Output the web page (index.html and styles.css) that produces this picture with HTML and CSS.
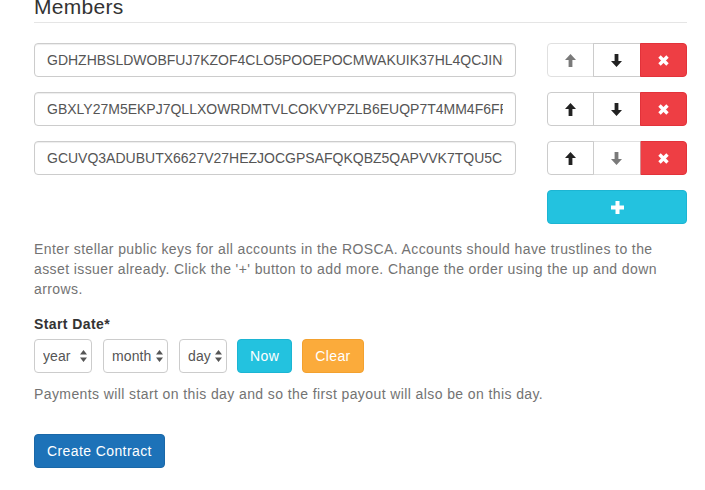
FILE: index.html
```html
<!DOCTYPE html>
<html lang="en">
<head>
<meta charset="utf-8">
<title>Members</title>
<link rel="stylesheet" href="styles.css">
</head>
<body>
<div class="page">
  <div class="legend">Members</div>

  <div class="member-row">
    <input class="form-control" type="text" value="GDHZHBSLDWOBFUJ7KZOF4CLO5POOEPOCMWAKUIK37HL4QCJINQ2R6">
    <div class="btn-group">
      <button class="btn btn-default" disabled>
        <svg class="ico" width="11" height="13" viewBox="0 0 11 13"><path d="M5.5 0 L11 6 H7.4 V13 H3.6 V6 H0 Z" fill="currentColor"/></svg>
      </button>
      <button class="btn btn-default">
        <svg class="ico" width="11" height="13" viewBox="0 0 11 13"><path d="M5.5 13 L11 7 H7.4 V0 H3.6 V7 H0 Z" fill="currentColor"/></svg>
      </button>
      <button class="btn btn-danger">
        <svg class="ico" width="11" height="11" viewBox="0 0 11 11"><path d="M1.5 1.5 L9.5 9.5 M9.5 1.5 L1.5 9.5" stroke="currentColor" stroke-width="3.4" stroke-linecap="butt"/></svg>
      </button>
    </div>
  </div>

  <div class="member-row">
    <input class="form-control" type="text" value="GBXLY27M5EKPJ7QLLXOWRDMTVLCOKVYPZLB6EUQP7T4MM4F6FRA2">
    <div class="btn-group">
      <button class="btn btn-default">
        <svg class="ico" width="11" height="13" viewBox="0 0 11 13"><path d="M5.5 0 L11 6 H7.4 V13 H3.6 V6 H0 Z" fill="currentColor"/></svg>
      </button>
      <button class="btn btn-default">
        <svg class="ico" width="11" height="13" viewBox="0 0 11 13"><path d="M5.5 13 L11 7 H7.4 V0 H3.6 V7 H0 Z" fill="currentColor"/></svg>
      </button>
      <button class="btn btn-danger">
        <svg class="ico" width="11" height="11" viewBox="0 0 11 11"><path d="M1.5 1.5 L9.5 9.5 M9.5 1.5 L1.5 9.5" stroke="currentColor" stroke-width="3.4"/></svg>
      </button>
    </div>
  </div>

  <div class="member-row">
    <input class="form-control" type="text" value="GCUVQ3ADUBUTX6627V27HEZJOCGPSAFQKQBZ5QAPVVK7TQU5CIL4M">
    <div class="btn-group">
      <button class="btn btn-default">
        <svg class="ico" width="11" height="13" viewBox="0 0 11 13"><path d="M5.5 0 L11 6 H7.4 V13 H3.6 V6 H0 Z" fill="currentColor"/></svg>
      </button>
      <button class="btn btn-default" disabled>
        <svg class="ico" width="11" height="13" viewBox="0 0 11 13"><path d="M5.5 13 L11 7 H7.4 V0 H3.6 V7 H0 Z" fill="currentColor"/></svg>
      </button>
      <button class="btn btn-danger">
        <svg class="ico" width="11" height="11" viewBox="0 0 11 11"><path d="M1.5 1.5 L9.5 9.5 M9.5 1.5 L1.5 9.5" stroke="currentColor" stroke-width="3.4"/></svg>
      </button>
    </div>
  </div>

  <div class="member-row add-row">
    <div></div>
    <button class="btn btn-info btn-block">
      <svg class="ico" width="13" height="13" viewBox="0 0 13 13"><path d="M6.5 0 V13 M0 6.5 H13" stroke="currentColor" stroke-width="4"/></svg>
    </button>
  </div>

  <p class="help-block first-help">Enter stellar public keys for all accounts in the ROSCA. Accounts should have trustlines to the asset issuer already. Click the '+' button to add more. Change the order using the up and down arrows.</p>

  <label class="control-label">Start Date*</label>
  <div class="date-row">
    <span class="select-wrap sel-year">
      <select class="form-select"><option>year</option></select>
      <svg class="caret" width="7" height="12" viewBox="0 0 7 12"><path d="M3.5 0 L7 4.5 H0 Z M3.5 12 L7 7.5 H0 Z" fill="currentColor"/></svg>
    </span>
    <span class="select-wrap sel-month">
      <select class="form-select"><option>month</option></select>
      <svg class="caret" width="7" height="12" viewBox="0 0 7 12"><path d="M3.5 0 L7 4.5 H0 Z M3.5 12 L7 7.5 H0 Z" fill="currentColor"/></svg>
    </span>
    <span class="select-wrap sel-day">
      <select class="form-select"><option>day</option></select>
      <svg class="caret" width="7" height="12" viewBox="0 0 7 12"><path d="M3.5 0 L7 4.5 H0 Z M3.5 12 L7 7.5 H0 Z" fill="currentColor"/></svg>
    </span>
    <button class="btn btn-info btn-text">Now</button>
    <button class="btn btn-warning btn-text">Clear</button>
  </div>
  <p class="help-block second-help">Payments will start on this day and so the first payout will also be on this day.</p>

  <button class="btn btn-primary btn-text create">Create Contract</button>
</div>
</body>
</html>
```

FILE: styles.css
```css
html, body {
  margin: 0;
  padding: 0;
  background: #fff;
}

body {
  font-family: "Liberation Sans", Arial, Helvetica, sans-serif;
  font-size: 14px;
  line-height: 20px;
  letter-spacing: 0.4px;
  color: #333;
  overflow: hidden;
}

.page {
  width: 653px;
  padding-left: 34px;
  margin-top: -8px;
}

.legend {
  font-size: 21px;
  line-height: 30px;
  height: 30px;
  letter-spacing: 0.3px;
  color: #333;
  border-bottom: 1px solid #e5e5e5;
  margin-bottom: 20px;
}

.member-row {
  display: grid;
  grid-template-columns: 482px 140px;
  justify-content: space-between;
  margin-bottom: 15px;
}

.form-control {
  box-sizing: border-box;
  height: 34px;
  width: 100%;
  padding: 6px 12px;
  font-family: inherit;
  font-size: 14px;
  line-height: 20px;
  letter-spacing: 0;
  color: #555;
  background: #fff;
  border: 1px solid #ccc;
  border-radius: 4px;
  box-shadow: inset 0 1px 1px rgba(0,0,0,.075);
  outline: none;
}

.btn-group {
  display: flex;
}

.btn {
  box-sizing: border-box;
  height: 34px;
  padding: 6px 12px;
  font-family: inherit;
  font-size: 14px;
  line-height: 20px;
  letter-spacing: 0.4px;
  border: 1px solid transparent;
  border-radius: 4px;
  display: inline-flex;
  align-items: center;
  justify-content: center;
  cursor: pointer;
}

.btn-group .btn {
  flex: 1 1 0;
  padding: 0;
  border-radius: 0;
}

.btn-group .btn + .btn {
  margin-left: -1px;
}

.btn-group .btn:first-child {
  border-radius: 4px 0 0 4px;
}

.btn-group .btn:last-child {
  border-radius: 0 4px 4px 0;
  flex-basis: 2px;
}

.btn-default {
  background: #fff;
  border-color: #ccc;
  color: #222;
}

.btn-default:disabled {
  opacity: .6;
  cursor: not-allowed;
}

.btn-danger {
  background: #ee3e44;
  border-color: #e2323a;
  color: #fff;
}

.btn-info {
  background: #23c2df;
  border-color: #1cb5d3;
  color: #fff;
}

.btn-warning {
  background: #fbab3b;
  border-color: #f3a12f;
  color: #fff;
}

.btn-primary {
  background: #1d72b8;
  border-color: #1a68a8;
  color: #fff;
}

.btn-block {
  width: 100%;
}

.ico {
  display: block;
}

.help-block {
  color: #737373;
  margin: 0;
}

.first-help {
  margin-top: 15px;
  margin-bottom: 15px;
}

.control-label {
  display: block;
  font-weight: bold;
  margin-bottom: 5px;
}

.date-row {
  display: flex;
  align-items: center;
}

.select-wrap {
  position: relative;
  display: block;
  margin-right: 11px;
}

.form-select {
  appearance: none;
  -webkit-appearance: none;
  box-sizing: border-box;
  height: 34px;
  padding: 0 0 0 8px;
  font-family: inherit;
  font-size: 14px;
  letter-spacing: 0.1px;
  color: #555;
  background: #fff;
  border: 1px solid #ccc;
  border-radius: 4px;
  outline: none;
  display: block;
}

.sel-year .form-select { width: 58px; }
.sel-month .form-select { width: 65px; }
.sel-day .form-select { width: 48px; }

.sel-day { margin-right: 10px; }

.caret {
  position: absolute;
  top: 11px;
  right: 5px;
  color: #555;
  pointer-events: none;
}

.btn-text {
  margin-right: 10px;
}

.second-help {
  margin-top: 11px;
  margin-bottom: 30px;
}

.create {
  margin: 0;
}
```
